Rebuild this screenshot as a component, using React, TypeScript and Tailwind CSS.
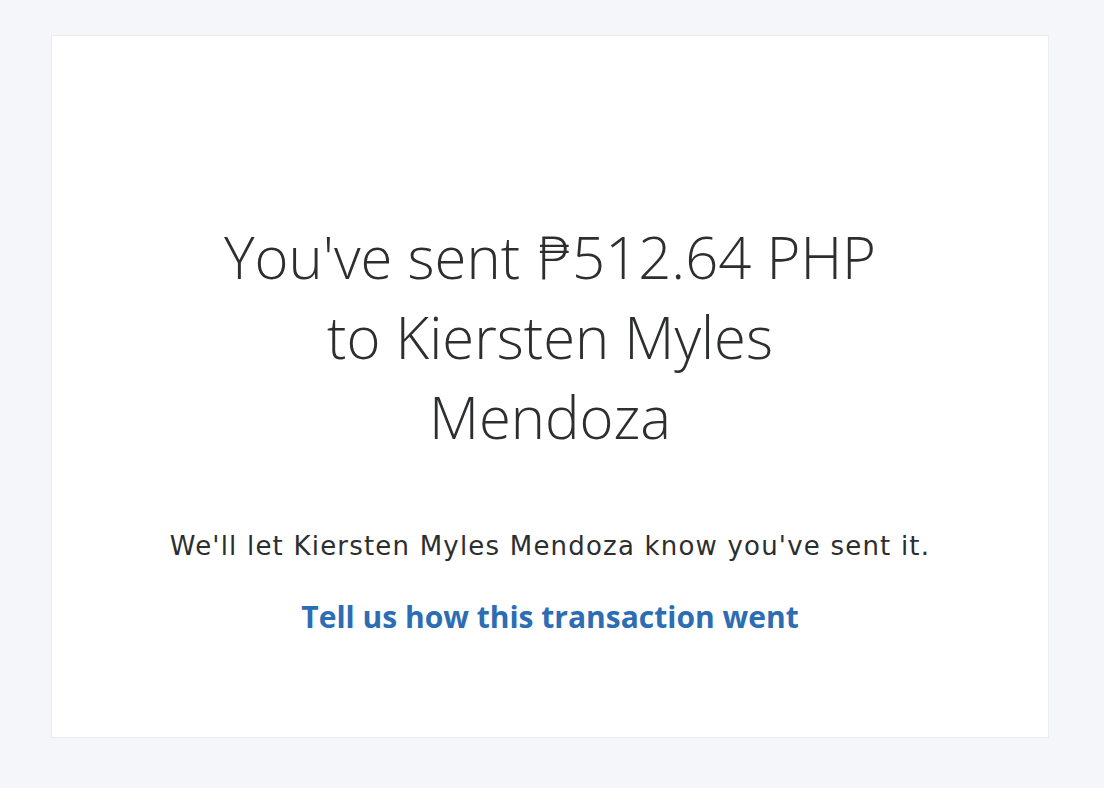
export default function App() {
  return (
    <div className="min-h-[788px] w-full bg-[#f5f6fa] pt-[35px] pl-[51px]" style={{ fontFamily: '"Open Sans", "Liberation Sans", sans-serif' }}>
      <div className="flex h-[703px] w-[998px] flex-col items-center border border-[#eaeced] bg-white pt-[181px] text-center">
        <h1 className="w-[680px] text-[58px] font-light leading-[80px] text-[#2c2e2f]">
          You've sent{' '}
          <span className="font-extralight leading-none" style={{ fontFamily: '"DejaVu Sans", sans-serif' }}>
            ₱
          </span>
          512.64 PHP to Kiersten Myles Mendoza
        </h1>
        <p
          className="mt-[73px] text-[26px] leading-[32px] tracking-[1.2px] text-[#2c2e2f]"
          style={{ fontFamily: '"DejaVu Sans", sans-serif' }}
        >
          We'll let Kiersten Myles Mendoza know you've sent it.
        </p>
        <a href="#" className="mt-[37px] text-[30px] font-bold leading-[36px] text-[#2c6db3]">
          Tell us how this transaction went
        </a>
      </div>
    </div>
  );
}
